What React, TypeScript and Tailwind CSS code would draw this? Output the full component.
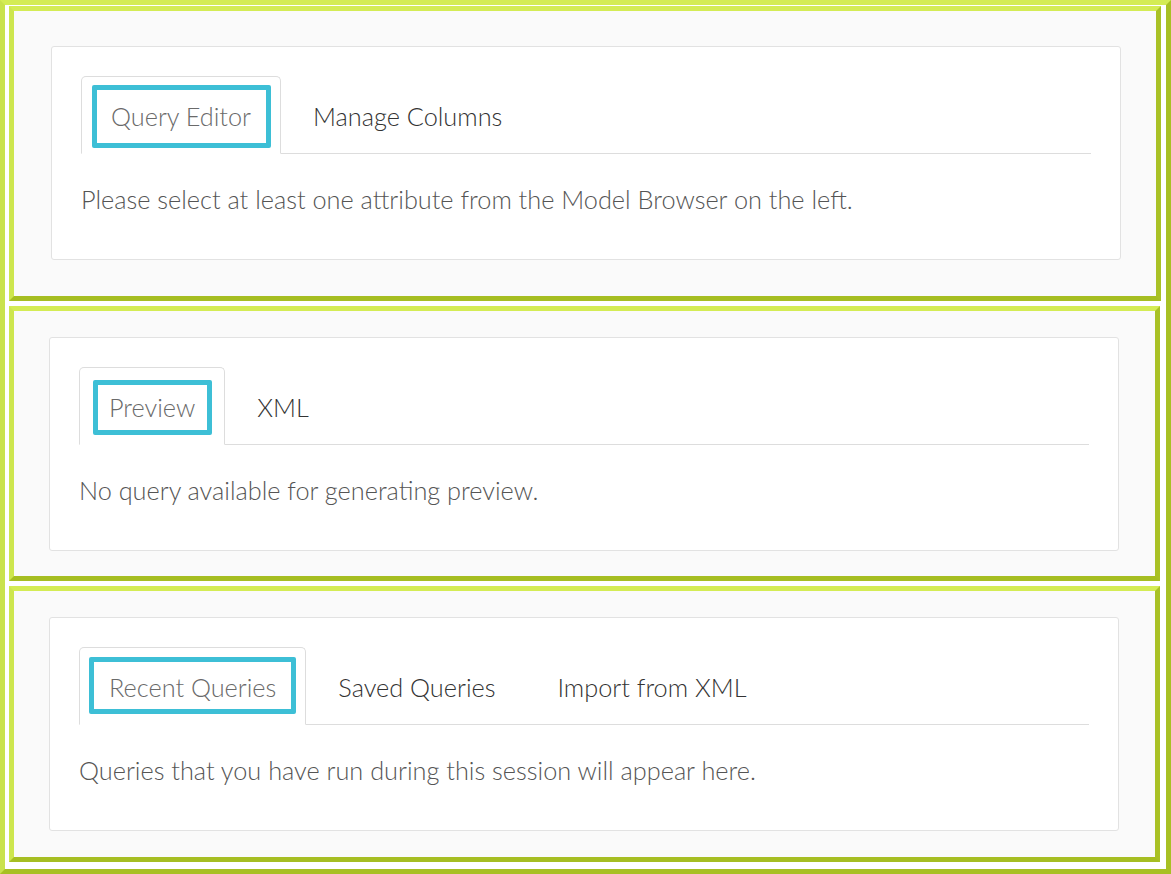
type Tab = { label: string };

interface PanelProps {
  tabs: Tab[];
  text: string;
  mark: string;
  section: string;
}

function Panel({ tabs, text, mark, section }: PanelProps) {
  return (
    <section className={`border-[5px] border-t-[#d4ec54] border-l-[#cde64e] border-r-[#a9c125] border-b-[#a6be22] bg-[#fafafa] ${section}`}>
      <div className="rounded-[3px] border border-[#e2e2e2] bg-white px-[29px] pt-[29px] pb-[45px]">
        <ul className="flex border-b border-[#dddddd]">
          {tabs.map((t, i) => (
            <li
              key={t.label}
              className={
                i === 0
                  ? "relative -mb-px mr-[2px] rounded-t-[5px] border border-[#dddddd] border-b-white bg-white px-[29px] pt-[24px] pb-[22px] text-[#6a6a6a]"
                  : "relative -mb-px mr-[2px] border border-transparent px-[29px] pt-[24px] pb-[22px] text-[#333333]"
              }
            >
              <span className="block leading-[30px]">{t.label}</span>
              {i === 0 && (
                <span className={`pointer-events-none absolute rounded-[2px] border-[5px] border-[#3dbfd6] ${mark}`} />
              )}
            </li>
          ))}
        </ul>
        <p className="mt-[30px] leading-[30px] text-[#555555]">{text}</p>
      </div>
    </section>
  );
}

export default function App() {
  return (
    <div
      className="h-[874px] w-[1171px] overflow-hidden border-[5px] border-t-[#d4ec54] border-l-[#c9e24c] border-r-[#a8c024] border-b-[#a8c024] bg-white pt-px pl-[4px] text-[25.3px] font-light"
      style={{ fontFamily: '"Lato", "Open Sans", sans-serif' }}
    >
      <div className="flex flex-col gap-[5px]">
        <Panel
          section="mr-[5px] pt-[35px] pb-[36px] pl-[37px] pr-[35px]"
          mark="left-[10px] top-[8px] h-[63px] w-[179px]"
          tabs={[{ label: "Query Editor" }, { label: "Manage Columns" }]}
          text="Please select at least one attribute from the Model Browser on the left."
        />
        <Panel
          section="mr-[6px] pt-[26px] pb-[25px] pl-[35px] pr-[36px]"
          mark="left-[13px] top-[12px] h-[55px] w-[119px]"
          tabs={[{ label: "Preview" }, { label: "XML" }]}
          text="No query available for generating preview."
        />
        <Panel
          section="mr-[6px] pt-[26px] pb-[26px] pl-[35px] pr-[36px]"
          mark="left-[9px] top-[9px] h-[57px] w-[207px]"
          tabs={[{ label: "Recent Queries" }, { label: "Saved Queries" }, { label: "Import from XML" }]}
          text="Queries that you have run during this session will appear here."
        />
      </div>
    </div>
  );
}
